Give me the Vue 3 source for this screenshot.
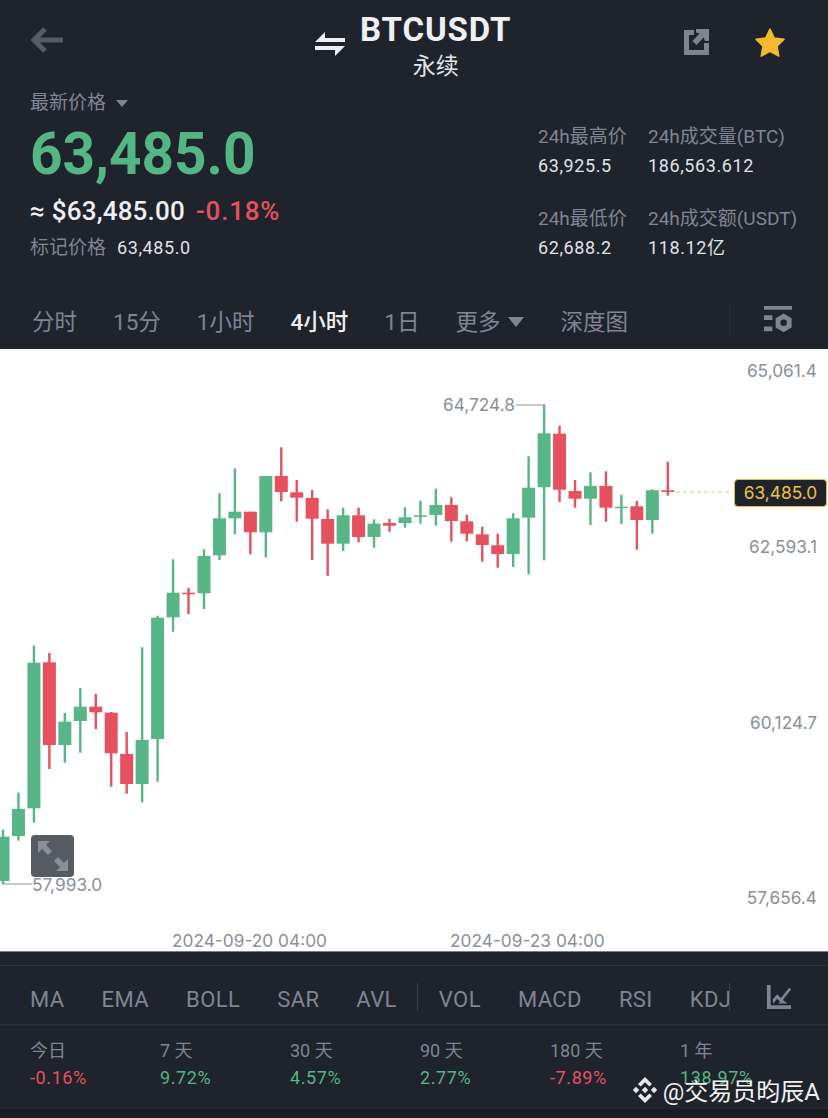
<script setup>
// [type, wickTop, wickBottom, bodyTop, bodyBottom]; page y coords
const rows = [
  ['g', 829.7, 884, 836.7, 881],
  ['g', 792.7, 840.7, 809, 836],
  ['g', 645.7, 822.7, 662.7, 808.3],
  ['r', 653, 769, 662.3, 745],
  ['g', 713, 762.7, 721.7, 745],
  ['g', 688, 752.7, 706.7, 721],
  ['r', 694, 729, 706.7, 712.3],
  ['r', 712, 786.7, 712.7, 753.3],
  ['r', 732, 793.7, 754, 784],
  ['g', 647.3, 802.3, 740, 784],
  ['g', 615.7, 781.7, 617.7, 739],
  ['g', 559.3, 631.7, 592.7, 617.3],
  ['r', 587.7, 614, 592.7, 594.2],
  ['g', 549.3, 609, 556, 593.3],
  ['g', 493.3, 560, 518.3, 555.3],
  ['g', 468.3, 534.3, 511.7, 518.3],
  ['r', 511.7, 554.3, 511.7, 532.3],
  ['g', 476, 557.3, 476, 532.3],
  ['r', 447.3, 501.3, 476, 492],
  ['r', 480, 521.7, 492.3, 497.7],
  ['r', 490, 560, 498, 518.7],
  ['r', 509.3, 575.7, 519, 543.7],
  ['g', 507.7, 551, 515.3, 543.7],
  ['r', 507.7, 542.3, 515.3, 537],
  ['g', 519.3, 547.7, 523.7, 537],
  ['r', 519, 531.7, 523, 525.7],
  ['g', 507.3, 527.7, 517.3, 523],
  ['g', 500.7, 523.7, 515.3, 516.7],
  ['g', 488.7, 525.7, 505, 515],
  ['r', 497.3, 541.7, 505, 521],
  ['r', 514.7, 541.3, 521.3, 533.7],
  ['r', 526.7, 561.7, 534.3, 545],
  ['r', 533.7, 567.7, 545.3, 554],
  ['g', 513.3, 567, 518.3, 554],
  ['g', 456.3, 574.3, 487.7, 517.7],
  ['g', 404.7, 560.3, 433.3, 487.3],
  ['r', 425.7, 502, 433.7, 489.7],
  ['r', 480, 507.7, 491, 498.7],
  ['g', 472.3, 525, 486, 498.7],
  ['r', 471.3, 521.7, 486, 507.7],
  ['g', 494.7, 524, 506.7, 507.7],
  ['r', 501, 549.7, 506.3, 520],
  ['g', 489.3, 533.7, 490.3, 520],
  ['r', 461.7, 495.7, 490.3, 492],
]
const candles = rows.map((r, i) => ({
  x: 3 + i * 15.46,
  color: r[0] === 'g' ? '#58b587' : '#e65160',
  wickTop: r[1],
  wickBottom: r[2],
  bodyTop: r[3],
  bodyHeight: r[4] - r[3],
}))

const axisLabels = [
  { text: '65,061.4', y: 377 },
  { text: '62,593.1', y: 553 },
  { text: '60,124.7', y: 729 },
  { text: '57,656.4', y: 904 },
]

const highs = [
  { label: '24h最高价', value: '63,925.5' },
  { label: '24h成交量(BTC)', value: '186,563.612' },
  { label: '24h最低价', value: '62,688.2' },
  { label: '24h成交额(USDT)', value: '118.12亿' },
]

const tabs = ['分时', '15分', '1小时', '4小时', '1日']
const mainInds = ['MA', 'EMA', 'BOLL', 'SAR', 'AVL']
const subInds = ['VOL', 'MACD', 'RSI', 'KDJ']
const stats = [
  { label: '今日', value: '-0.16%', down: true },
  { label: '7 天', value: '9.72%' },
  { label: '30 天', value: '4.57%' },
  { label: '90 天', value: '2.77%' },
  { label: '180 天', value: '-7.89%', down: true },
  { label: '1 年', value: '138.97%' },
]
</script>

<template>
  <div class="page">
    <header class="top">
      <div class="nav">
        <svg class="back" width="36" height="28" viewBox="0 0 36 28">
          <path d="M34 14H6M16 3L5 14l11 11" fill="none" stroke="#565a63" stroke-width="5" />
        </svg>
        <div class="title">
          <svg class="swap" width="32" height="28" viewBox="0 0 32 28">
            <path d="M11 2v6h20v4H1z" fill="#eceef0" />
            <path d="M21 26v-6H1v-4h30z" fill="#eceef0" />
          </svg>
          <div class="title-text">
            <div class="symbol">BTCUSDT</div>
            <div class="contract">永续</div>
          </div>
        </div>
        <div class="nav-icons">
          <svg width="28" height="28" viewBox="0 0 28 28">
            <path d="M12 2H2v25h25V15h-5v7H7V7h5z" fill="#7f8490" />
            <path d="M27 1v12h-4l-1.500-3.500-7 7.500-4-4 7-7.500L14 4.500V1z" fill="#7f8490" />
          </svg>
          <svg class="star" width="32" height="32" viewBox="0 0 32 32">
            <path d="M16 2l4.300 9 9.700 1.300-7 6.800 1.800 10L16 24.400 7.200 29.100 9 19.100 2 12.300 11.700 11z" fill="#f3ba2f" stroke="#f3ba2f" stroke-width="1.500" stroke-linejoin="round" />
          </svg>
        </div>
      </div>

      <div class="summary">
        <div class="prices">
          <div class="latest">最新价格<span class="caret small"></span></div>
          <div class="big-price">63,485.0</div>
          <div class="usd">≈ $63,485.00<span class="change">-0.18%</span></div>
          <div class="mark"><span>标记价格</span><b>63,485.0</b></div>
        </div>
        <div class="highs">
          <div v-for="h in highs" :key="h.label" class="high">
            <div class="high-label">{{ h.label }}</div>
            <div class="high-value">{{ h.value }}</div>
          </div>
        </div>
      </div>

      <div class="tabs">
        <span v-for="t in tabs" :key="t" :class="{ active: t === '4小时' }">{{ t }}</span>
        <span>更多<i class="caret"></i></span>
        <span>深度图</span>
        <div class="tabs-end">
          <svg width="30" height="30" viewBox="0 0 32 32">
            <path d="M1 1h30v4H1zM1 11h9v5H1zM1 23h9v5H1z" fill="#7f8490" />
            <path d="M22 9l8.500 5v10L22 29l-8.500-5V14z" fill="#7f8490" />
            <circle cx="22" cy="19" r="3.500" fill="#1f232c" />
          </svg>
        </div>
      </div>
    </header>

    <section class="chart">
      <svg class="plot" width="828" height="602" viewBox="0 349 828 602">
        <g v-for="(c, i) in candles" :key="i">
          <rect :x="c.x - 1.200" :y="c.wickTop" width="2.400" :height="c.wickBottom - c.wickTop" :fill="c.color" />
          <rect :x="c.x - 6.500" :y="c.bodyTop" width="13" :height="Math.max(c.bodyHeight, 1.500)" :fill="c.color" />
        </g>

        <path d="M516 405H545M2 884H32" fill="none" stroke="#8a8f99" stroke-width="1.200" />
        <path d="M676 492H733" fill="none" stroke="#f7dc8f" stroke-width="1.500" stroke-dasharray="4 3" />

        <text class="tick" x="443" y="411">64,724.8</text>
        <text class="tick" x="32" y="891">57,993.0</text>
        <text v-for="a in axisLabels" :key="a.text" class="tick" x="817" :y="a.y" text-anchor="end">{{ a.text }}</text>
        <text class="tick" x="172" y="947">2024-09-20 04:00</text>
        <text class="tick" x="450" y="947">2024-09-23 04:00</text>
      </svg>

      <div class="last-price">63,485.0</div>
      <div class="expand">
        <svg width="32" height="32" viewBox="0 0 32 32">
          <path d="M1 1h12l-4 4 6 6-4 4-6-6-4 4zM31 31H19l4-4-6-6 4-4 6 6 4-4z" fill="#8a8f9a" />
        </svg>
      </div>
    </section>

    <section class="bottom">
      <div class="inds">
        <div class="ind-list">
          <span v-for="m in mainInds" :key="m">{{ m }}</span>
          <i class="sep"></i>
          <span v-for="s in subInds" :key="s">{{ s }}</span>
        </div>
        <svg class="ind-icon" width="26" height="28" viewBox="0 0 28 28">
          <path d="M1 1h4v22h22v4H1z" fill="#7f8490" />
          <path d="M7 17l5-6 4 4 9-11 2 2-11 14-4-4-4 5z" fill="#7f8490" />
          <path d="M13 21l5-4 5 4z" fill="#7f8490" />
        </svg>
      </div>
      <div class="stats">
        <div v-for="s in stats" :key="s.label">
          <div class="stat-label">{{ s.label }}</div>
          <div class="stat-value" :class="{ down: s.down }">{{ s.value }}</div>
        </div>
      </div>
      <div class="strip"></div>
      <div class="watermark">
        <svg width="28" height="28" viewBox="0 0 28 28">
          <g fill="#e8e8e8">
            <path d="M14 1l7 7-2.600 2.600L14 6.200 9.600 10.600 7 8z" />
            <path d="M14 27l7-7-2.600-2.600L14 21.800 9.600 17.400 7 20z" />
            <path d="M5 10.800L8.200 14 5 17.200 1.800 14z" />
            <path d="M23 10.800L26.200 14 23 17.200 19.800 14z" />
            <path d="M14 10.800L17.200 14 14 17.200 10.800 14z" />
          </g>
        </svg>
        <span>@交易员昀辰A</span>
      </div>
    </section>
  </div>
</template>

<style>
html, body {
  margin: 0;
  background: #1f232c;
}
</style>

<style scoped>
.page {
  width: 828px;
  height: 1118px;
  overflow: hidden;
  background: #1f232c;
  font-family: Roboto, "Noto Sans CJK SC", sans-serif;
  color: #7f8592;
}

.top {
  height: 349px;
  display: flex;
  flex-direction: column;
}

.nav {
  height: 85px;
  box-sizing: border-box;
  padding: 10px 42px 0 29px;
  display: flex;
  align-items: flex-start;
}
.back {
  margin-top: 16px;
}
.title {
  margin-left: 249px;
  display: flex;
  gap: 14px;
}
.swap {
  margin-top: 20px;
}
.title-text {
  text-align: center;
}
.symbol {
  font-size: 33px;
  line-height: 40px;
  font-weight: 700;
  color: #eef0f2;
  letter-spacing: 0.9px;
}
.contract {
  font-size: 23px;
  line-height: 34px;
  color: #e4e6e9;
}
.nav-icons {
  margin-left: auto;
  display: flex;
  gap: 44px;
  margin-top: 18px;
  align-items: flex-start;
}
.star {
  margin-top: -1px;
}

.summary {
  display: flex;
  justify-content: space-between;
  padding: 1px 0 0 30px;
  height: 204px;
}
.latest {
  font-size: 19px;
  line-height: 34px;
  margin-bottom: 3px;
}
.caret {
  display: inline-block;
  width: 0;
  height: 0;
  border-left: 8px solid transparent;
  border-right: 8px solid transparent;
  border-top: 10px solid #7f8490;
  margin-left: 8px;
  vertical-align: 3px;
}
.caret.small {
  border-left-width: 6px;
  border-right-width: 6px;
  border-top-width: 7px;
  margin-left: 10px;
  vertical-align: 2px;
}
.big-price {
  font-size: 60px;
  line-height: 62px;
  font-weight: 700;
  color: #55b685;
  transform: scaleX(0.945);
  transform-origin: left center;
}
.usd {
  margin-top: 8px;
  font-size: 26px;
  line-height: 36px;
  font-weight: 500;
  color: #eef0f2;
  letter-spacing: 0.2px;
}
.change {
  margin-left: 11px;
  color: #e65160;
  letter-spacing: 0.8px;
}
.mark {
  display: flex;
  align-items: center;
  gap: 11px;
  font-size: 19px;
  line-height: 38px;
}
.mark b {
  font-size: 18px;
  font-weight: 400;
  color: #dfe2e6;
  letter-spacing: 0.6px;
}

.highs {
  width: 290px;
  display: grid;
  grid-template-columns: 110px 180px;
  grid-auto-rows: 82px;
  padding-top: 36px;
}
.high-label {
  font-size: 19px;
  line-height: 29px;
}
.high-value {
  font-size: 18px;
  line-height: 29px;
  color: #dfe2e6;
  letter-spacing: 0.6px;
}

.tabs {
  flex: 1;
  display: flex;
  align-items: center;
  gap: 36px;
  padding: 0 35px 0 32px;
  font-size: 22.500px;
}
.tabs .active {
  color: #f0f1f3;
  font-weight: 500;
}
.tabs-end {
  margin-left: auto;
  padding-left: 33px;
  border-left: 1px solid #2a2e37;
  display: flex;
  align-items: center;
  height: 32px;
}

.chart {
  position: relative;
  height: 602px;
  background: #fff;
}
.plot {
  display: block;
}
.tick {
  font-family: Inter, sans-serif;
  font-size: 17.300px;
  fill: #8a8f99;
}
.last-price {
  position: absolute;
  left: 734px;
  top: 130px;
  width: 93px;
  height: 28px;
  box-sizing: border-box;
  line-height: 26px;
  text-align: center;
  background: #1f232c;
  border: 1px solid #e8b93a;
  border-radius: 4px;
  color: #eec23a;
  font-family: Inter, sans-serif;
  font-size: 17.300px;
}
.expand {
  position: absolute;
  left: 31px;
  top: 486px;
  width: 43px;
  height: 42px;
  background: #565a63;
  border-radius: 4px;
  display: flex;
  align-items: center;
  justify-content: center;
}

.bottom {
  position: relative;
  height: 167px;
  border-top: 1px solid #7b7e84;
  box-sizing: border-box;
}
.inds {
  margin-top: 13px;
  height: 60px;
  box-sizing: border-box;
  padding-top: 4px;
  border-top: 1px solid #2f343e;
  border-bottom: 1px solid #2f343e;
  display: flex;
  align-items: center;
  padding-left: 30px;
}
.ind-list {
  width: 699px;
  height: 28px;
  overflow: hidden;
  display: flex;
  align-items: center;
  gap: 37px;
  white-space: nowrap;
  font-size: 22px;
  letter-spacing: 0.4px;
  border-right: 1px solid #3b3f49;
  flex-shrink: 0;
}
.ind-list span {
  line-height: 22px;
  padding-top: 6px;
}
.sep {
  width: 1px;
  height: 28px;
  background: #3b3f49;
  margin: 0 -16.500px;
  flex-shrink: 0;
}
.ind-icon {
  margin-left: 36px;
}
.stats {
  display: grid;
  grid-template-columns: repeat(6, 130px);
  padding: 12px 0 0 30px;
  height: 72px;
}
.stat-label {
  font-size: 18px;
  line-height: 28px;
}
.stat-value {
  font-size: 18px;
  line-height: 26px;
  color: #55b685;
  letter-spacing: 0.6px;
}
.stat-value.down {
  color: #e65160;
}
.strip {
  height: 10px;
  background: #181b21;
}
.watermark {
  position: absolute;
  right: 8px;
  bottom: 11px;
  display: flex;
  align-items: center;
  gap: 4px;
  font-size: 24px;
  color: #f1f1f1;
}
</style>
